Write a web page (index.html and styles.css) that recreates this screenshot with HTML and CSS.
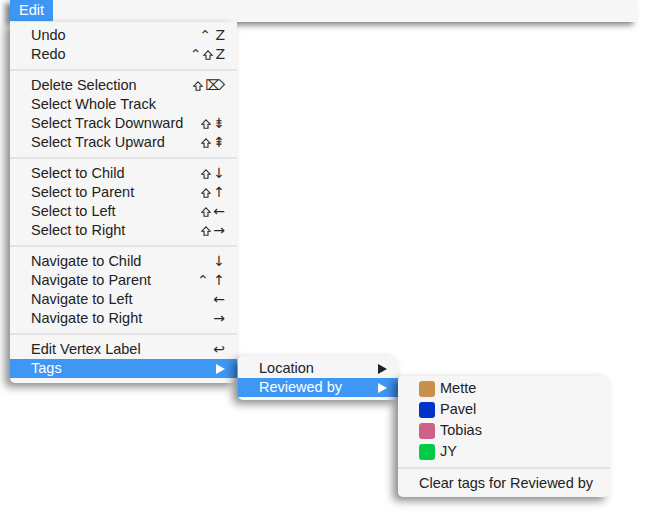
FILE: index.html
```html
<!DOCTYPE html>
<html>
<head>
<meta charset="utf-8">
<link rel="stylesheet" href="styles.css">
</head>
<body>
<div class="menubar">
  <div class="title">Edit
    <div class="menu main">
      <div class="item"><span>Undo</span><span class="key">⌃ Z</span></div>
      <div class="item"><span>Redo</span><span class="key">⌃<svg class="shift" viewBox="0 0 10 10"><path d="M5 0.8 L9.3 5.2 H7 V9.2 H3 V5.2 H0.7 Z"/></svg>Z</span></div>
      <div class="sep"></div>
      <div class="item"><span>Delete Selection</span><span class="key"><svg class="shift" viewBox="0 0 10 10"><path d="M5 0.8 L9.3 5.2 H7 V9.2 H3 V5.2 H0.7 Z"/></svg>⌦</span></div>
      <div class="item"><span>Select Whole Track</span></div>
      <div class="item"><span>Select Track Downward</span><span class="key"><svg class="shift" viewBox="0 0 10 10"><path d="M5 0.8 L9.3 5.2 H7 V9.2 H3 V5.2 H0.7 Z"/></svg>⇟</span></div>
      <div class="item"><span>Select Track Upward</span><span class="key"><svg class="shift" viewBox="0 0 10 10"><path d="M5 0.8 L9.3 5.2 H7 V9.2 H3 V5.2 H0.7 Z"/></svg>⇞</span></div>
      <div class="sep"></div>
      <div class="item"><span>Select to Child</span><span class="key"><svg class="shift" viewBox="0 0 10 10"><path d="M5 0.8 L9.3 5.2 H7 V9.2 H3 V5.2 H0.7 Z"/></svg>↓</span></div>
      <div class="item"><span>Select to Parent</span><span class="key"><svg class="shift" viewBox="0 0 10 10"><path d="M5 0.8 L9.3 5.2 H7 V9.2 H3 V5.2 H0.7 Z"/></svg>↑</span></div>
      <div class="item"><span>Select to Left</span><span class="key"><svg class="shift" viewBox="0 0 10 10"><path d="M5 0.8 L9.3 5.2 H7 V9.2 H3 V5.2 H0.7 Z"/></svg>←</span></div>
      <div class="item"><span>Select to Right</span><span class="key"><svg class="shift" viewBox="0 0 10 10"><path d="M5 0.8 L9.3 5.2 H7 V9.2 H3 V5.2 H0.7 Z"/></svg>→</span></div>
      <div class="sep"></div>
      <div class="item"><span>Navigate to Child</span><span class="key">↓</span></div>
      <div class="item"><span>Navigate to Parent</span><span class="key">⌃ ↑</span></div>
      <div class="item"><span>Navigate to Left</span><span class="key">←</span></div>
      <div class="item"><span>Navigate to Right</span><span class="key">→</span></div>
      <div class="sep"></div>
      <div class="item"><span>Edit Vertex Label</span><span class="key">↩</span></div>
      <div class="item active sub-host"><span>Tags</span><span class="arrow"></span>
        <div class="menu sub1">
          <div class="item"><span>Location</span><span class="arrow"></span></div>
          <div class="item active sub-host"><span>Reviewed by</span><span class="arrow"></span>
            <div class="menu sub2">
              <div class="item tag"><span class="sw mette"></span><span>Mette</span></div>
              <div class="item tag"><span class="sw pavel"></span><span>Pavel</span></div>
              <div class="item tag"><span class="sw tobias"></span><span>Tobias</span></div>
              <div class="item tag"><span class="sw jy"></span><span>JY</span></div>
              <div class="sep"></div>
              <div class="item"><span>Clear tags for Reviewed by</span></div>
            </div>
          </div>
        </div>
      </div>
    </div>
  </div>
</div>
</body>
</html>
```
FILE: styles.css
```css
html, body {
  margin: 0;
  padding: 0;
  background: #ffffff;
}
body {
  font-family: "Liberation Sans", Arial, sans-serif;
  font-size: 14.5px;
  color: #222222;
  width: 646px;
  height: 526px;
  overflow: hidden;
}
.menubar {
  margin-left: 10px;
  width: 628px;
  height: 22px;
  background: #f6f6f6;
  box-shadow: -5px 3px 6px rgba(0,0,0,0.5);
  display: flex;
  position: relative;
  z-index: 1;
}
.title {
  position: relative;
  height: 21px;
  line-height: 21px;
  padding: 0 9px;
  background: #3f97f5;
  color: #ffffff;
  font-size: 14.5px;
}
.menu {
  position: absolute;
  background: #f6f6f6;
  color: #222222;
  font-size: 14.5px;
  line-height: 19px;
  box-shadow: -5px 4px 8px rgba(0,0,0,0.45);
}
.main {
  left: 0;
  top: 22px;
  width: 227px;
  padding: 4px 0 5px;
  border-radius: 0 0 5px 5px;
}
.item {
  position: relative;
  display: flex;
  justify-content: space-between;
  align-items: center;
  height: 19px;
  padding: 0 12px 0 21px;
  white-space: nowrap;
}
.item.active {
  background: #3f97f5;
  color: #ffffff;
}
.key {
  display: flex;
  align-items: center;
  gap: 2px;
  font-family: "DejaVu Sans", sans-serif;
  font-size: 14px;
  color: #2a2a2a;
}
.shift {
  width: 10px;
  height: 10px;
  fill: none;
  stroke: #2a2a2a;
  stroke-width: 1.1;
  stroke-linejoin: miter;
}
.sep {
  height: 2px;
  background: #e3e3e3;
  margin: 5px 0 5px;
}
.arrow {
  width: 0;
  height: 0;
  border-top: 5px solid transparent;
  border-bottom: 5px solid transparent;
  border-left: 9px solid #222222;
}
.active > .arrow {
  border-left-color: #ffffff;
}
.sub1 {
  left: 228px;
  top: -3px;
  width: 160px;
  padding: 3px 0 3px;
  border-radius: 5px;
}
.sub1 .item {
  padding-right: 11px;
}
.sub2 {
  left: 160px;
  top: -2px;
  width: 212px;
  padding: 2px 0 4px;
  border-radius: 5px;
}
.sub2 .item {
  justify-content: flex-start;
}
.item.tag {
  height: 21px;
}
.sw {
  width: 16px;
  height: 16px;
  border-radius: 3px;
  margin-right: 5px;
}
.mette { background: #c88f4e; }
.pavel { background: #0033c8; }
.tobias { background: #cf6089; }
.jy { background: #00cc45; }
```
